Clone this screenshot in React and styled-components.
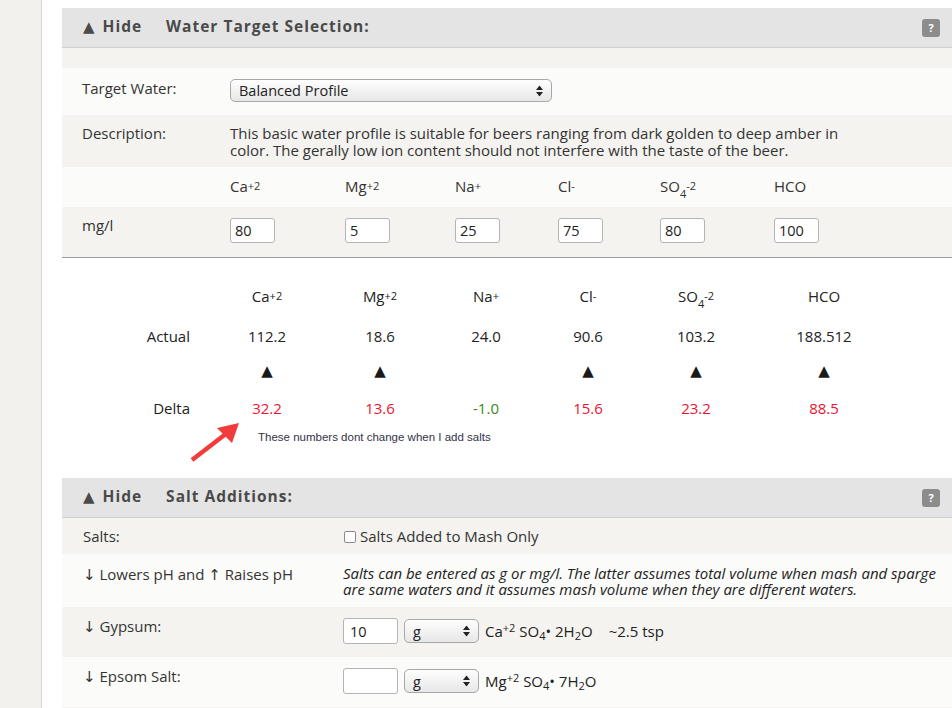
import React from 'react'
import styled, { createGlobalStyle } from 'styled-components'

const GlobalStyle = createGlobalStyle`
  html, body {
    margin: 0;
    background: #fff;
    font-family: "Open Sans", "Liberation Sans", sans-serif;
    color: #333;
    overflow: hidden;
  }
`

const ions = [
  { key: 'ca', name: 'Ca', sup: '+2', target: '80', actual: '112.2', delta: '32.2', up: true },
  { key: 'mg', name: 'Mg', sup: '+2', target: '5', actual: '18.6', delta: '13.6', up: true },
  { key: 'na', name: 'Na', sup: '+', target: '25', actual: '24.0', delta: '-1.0', up: false },
  { key: 'cl', name: 'Cl', sup: '-', target: '75', actual: '90.6', delta: '15.6', up: true },
  { key: 'so4', name: 'SO', sub: '4', sup: '-2', target: '80', actual: '103.2', delta: '23.2', up: true },
  { key: 'hco', name: 'HCO', target: '100', actual: '188.512', delta: '88.5', up: true },
]

function IonLabel({ ion }) {
  return (
    <span>
      {ion.name}
      {ion.sub && <Sub>{ion.sub}</Sub>}
      {ion.sup && <Sup>{ion.sup}</Sup>}
    </span>
  )
}

function SelectArrows() {
  return (
    <ArrowIcon width="7" height="11" viewBox="0 0 7 11">
      <polygon points="0,4.5 3.5,0 7,4.5" fill="#222" />
      <polygon points="0,6.5 3.5,11 7,6.5" fill="#222" />
    </ArrowIcon>
  )
}

function Select({ width, height, value }) {
  return (
    <SelectWrap>
      <SelectBox $w={width} $h={height} defaultValue={value}>
        <option>{value}</option>
      </SelectBox>
      <SelectArrows />
    </SelectWrap>
  )
}

function PanelHeader({ title }) {
  return (
    <Header>
      <Toggle><HeadArrow>▲</HeadArrow>Hide</Toggle>
      <Title>{title}</Title>
      <Help>?</Help>
    </Header>
  )
}

function App() {
  return (
    <Page>
      <GlobalStyle />
      <Sidebar />
      <Main>
        <Panel>
          <PanelHeader title="Water Target Selection:" />
          <Stripe />
          <Row $label={148} $h={47}>
            <Label>Target Water:</Label>
            <SelectCell>
              <Select width={322} height={23} value="Balanced Profile" />
            </SelectCell>
          </Row>
          <Row $label={148} $h={52} $alt $lh={17}>
            <Label>Description:</Label>
            <Description>
              This basic water profile is suitable for beers ranging from dark golden to deep amber in
              color. The gerally low ion content should not interfere with the taste of the beer.
            </Description>
          </Row>
          <Row $label={148} $h={40} $pt={9}>
            <Label />
            <IonGrid>
              {ions.map(i => <IonLabel key={i.key} ion={i} />)}
            </IonGrid>
          </Row>
          <Row $label={148} $h={51} $alt $pt={8} $border>
            <Label>mg/l</Label>
            <IonGrid>
              {ions.map(i => (
                <IonInput key={i.key} defaultValue={i.target} />
              ))}
            </IonGrid>
          </Row>

          <Results>
            <ResultsGrid>
              <span />
              {ions.map(i => <IonLabel key={i.key} ion={i} />)}

              <ResultLabel>Actual</ResultLabel>
              {ions.map(i => <span key={i.key}>{i.actual}</span>)}

              <span />
              {ions.map(i => <Triangle key={i.key}>{i.up ? '▲' : ''}</Triangle>)}

              <ResultLabel>Delta</ResultLabel>
              {ions.map(i => (
                <DeltaValue key={i.key} $neg={i.delta.startsWith('-')}>{i.delta}</DeltaValue>
              ))}

              <span />
              <Note>These numbers dont change when I add salts</Note>
            </ResultsGrid>
            <Pointer width="60" height="48" viewBox="0 0 60 48">
              <line x1="7" y1="42" x2="42" y2="15" stroke="#f23b3b" strokeWidth="4.5" />
              <polygon points="54,5 32,10 47,25" fill="#f23b3b" />
            </Pointer>
          </Results>
        </Panel>

        <Panel>
          <PanelHeader title="Salt Additions:" />
          <Row $label={260} $h={36} $alt $pl={21} $pt={8}>
            <Label>Salts:</Label>
            <CheckLine>
              <Check type="checkbox" />
              Salts Added to Mash Only
            </CheckLine>
          </Row>
          <Row $label={260} $h={53} $pl={21}>
            <Label><Arrow>↓</Arrow> Lowers pH and <Arrow>↑</Arrow> Raises pH</Label>
            <Hint>
              Salts can be entered as g or mg/l. The latter assumes total volume when mash and sparge
              are same waters and it assumes mash volume when they are different waters.
            </Hint>
          </Row>
          <Row $label={260} $h={50} $alt $pl={21} $pt={9}>
            <Label><Arrow>↓</Arrow> Gypsum:</Label>
            <SaltControls>
              <SaltInput defaultValue="10" />
              <Select width={75} height={24} value="g" />
              <Formula>
                Ca<FSup>+2</FSup> SO<FSub>4</FSub>• 2H<FSub>2</FSub>O<Tsp>~2.5 tsp</Tsp>
              </Formula>
            </SaltControls>
          </Row>
          <Row $label={260} $h={50} $pl={21} $pt={9}>
            <Label><Arrow>↓</Arrow> Epsom Salt:</Label>
            <SaltControls>
              <SaltInput defaultValue="" />
              <Select width={75} height={24} value="g" />
              <Formula>
                Mg<FSup>+2</FSup> SO<FSub>4</FSub>• 7H<FSub>2</FSub>O
              </Formula>
            </SaltControls>
          </Row>
          <Row $label={260} $h={50} $alt $pl={21} />
        </Panel>
      </Main>
    </Page>
  )
}

export default App

const Page = styled.div`
  display: flex;
  height: 708px;
  overflow: hidden;
`
const Sidebar = styled.div`
  width: 41px;
  flex-shrink: 0;
  background: #f3f1ed;
  border-right: 1px solid #d9d6d0;
`
const Main = styled.div`
  flex: 1;
  min-width: 0;
  padding: 8px 0 0 20px;
`
const Panel = styled.div`
  width: 892px;
`
const Header = styled.div`
  box-sizing: border-box;
  height: 40px;
  display: flex;
  align-items: center;
  padding: 0 14px 3px 21px;
  background: #e4e4e4;
  border-bottom: 1px solid #d0d0d0;
  color: #4a4a4a;
  font-weight: 700;
  font-size: 15.5px;
  letter-spacing: 1px;
`
const Toggle = styled.span`
  margin-right: 24px;
`
const HeadArrow = styled.span`
  font-family: "DejaVu Sans", sans-serif;
  font-size: 15px;
  letter-spacing: 0;
  margin-right: 8px;
`
const Title = styled.span`
  flex: 1;
`
const Help = styled.span`
  width: 18px;
  height: 18px;
  margin-top: 3px;
  border-radius: 3px;
  background: #8c8c8c;
  color: #fff;
  font-size: 11px;
  letter-spacing: 0;
  display: flex;
  align-items: center;
  justify-content: center;
`
const Stripe = styled.div`
  height: 20px;
  background: #f4f3f0;
`
const Row = styled.div`
  display: grid;
  grid-template-columns: ${p => p.$label}px 1fr;
  align-items: start;
  box-sizing: border-box;
  height: ${p => p.$h}px;
  padding: ${p => p.$pt ?? 10}px 0 0 ${p => p.$pl ?? 20}px;
  background: ${p => (p.$alt ? '#f4f3f0' : '#fbfbf9')};
  border-bottom: ${p => (p.$border ? '1px solid #9c9c9c' : 'none')};
  font-size: 15px;
  line-height: ${p => p.$lh ?? 20}px;
  color: #333;
`
const Label = styled.div``
const Arrow = styled.span`
  font-family: "DejaVu Sans", sans-serif;
  font-size: 15px;
`
const SelectCell = styled.div`
  margin-top: 1px;
`
const Description = styled.div`
  max-width: 625px;
`
const IonGrid = styled.div`
  display: grid;
  grid-template-columns: 115px 110px 103px 102px 114px 80px;
  align-items: start;
`
const Sup = styled.sup`
  font-size: 11px;
  vertical-align: 2px;
  line-height: 0;
`
const Sub = styled.sub`
  font-size: 11px;
  vertical-align: -6px;
  line-height: 0;
`
const IonInput = styled.input`
  box-sizing: border-box;
  width: 45px;
  height: 25px;
  margin-top: 3px;
  padding: 0 4px;
  border: 1px solid #b4b4b4;
  border-radius: 3px;
  font-family: "Open Sans", sans-serif;
  font-size: 14.5px;
  color: #222;
  background: #fff;
`
const SelectWrap = styled.span`
  position: relative;
  display: inline-block;
  vertical-align: middle;
`
const SelectBox = styled.select`
  appearance: none;
  -webkit-appearance: none;
  box-sizing: border-box;
  width: ${p => p.$w}px;
  height: ${p => p.$h}px;
  padding: 0 8px;
  border: 1px solid #a8a8a8;
  border-radius: 5px;
  background: linear-gradient(#fefefe, #e7e7e7);
  font-family: "Open Sans", sans-serif;
  font-size: 14.5px;
  color: #222;
  display: block;
`
const ArrowIcon = styled.svg`
  position: absolute;
  right: 9px;
  top: 50%;
  transform: translateY(-50%);
  pointer-events: none;
`
const Results = styled.div`
  position: relative;
  padding: 18px 0 34px;
  background: #fff;
`
const ResultsGrid = styled.div`
  display: grid;
  grid-template-columns: 148px 114px 112px 100px 104px 112px 144px;
  grid-template-rows: 40px 40px 30px 44px 14px;
  align-items: center;
  text-align: center;
  font-size: 15px;
  line-height: 20px;
  color: #222;
`
const ResultLabel = styled.span`
  text-align: right;
  padding-right: 20px;
`
const Triangle = styled.span`
  font-family: "DejaVu Sans", sans-serif;
  font-size: 15px;
  color: #1a1a1a;
`
const DeltaValue = styled.span`
  color: ${p => (p.$neg ? '#3b8a22' : '#f0122f')};
`
const Note = styled.span`
  grid-column: 2 / span 5;
  text-align: left;
  padding-left: 48px;
  font-family: "Liberation Sans", Arial, sans-serif;
  font-size: 11.5px;
  line-height: 14px;
  color: #33334a;
`
const Pointer = styled.svg`
  position: absolute;
  left: 123px;
  top: 160px;
`
const CheckLine = styled.label`
  display: flex;
  align-items: center;
`
const Check = styled.input`
  appearance: none;
  -webkit-appearance: none;
  width: 12px;
  height: 12px;
  margin: 1px 4px 0 1px;
  border: 1px solid #8a8a8a;
  border-radius: 2px;
  background: #fff;
`
const Hint = styled.div`
  font-style: italic;
  line-height: 16px;
  margin-top: 1px;
  max-width: 600px;
  color: #222;
`
const SaltControls = styled.div`
  display: flex;
  align-items: center;
  gap: 6px;
  margin-top: 2px;
`
const SaltInput = styled.input`
  box-sizing: border-box;
  width: 55px;
  height: 26px;
  padding: 0 6px;
  border: 1px solid #b4b4b4;
  border-radius: 3px;
  font-family: "Open Sans", sans-serif;
  font-size: 14.5px;
  color: #222;
  background: #fff;
`
const Formula = styled.span`
  font-size: 15px;
  color: #222;
`
const FSup = styled.sup`
  font-size: 11px;
  vertical-align: 5px;
  line-height: 0;
`
const FSub = styled.sub`
  font-size: 11px;
  vertical-align: -3px;
  line-height: 0;
`
const Tsp = styled.span`
  margin-left: 16px;
`
